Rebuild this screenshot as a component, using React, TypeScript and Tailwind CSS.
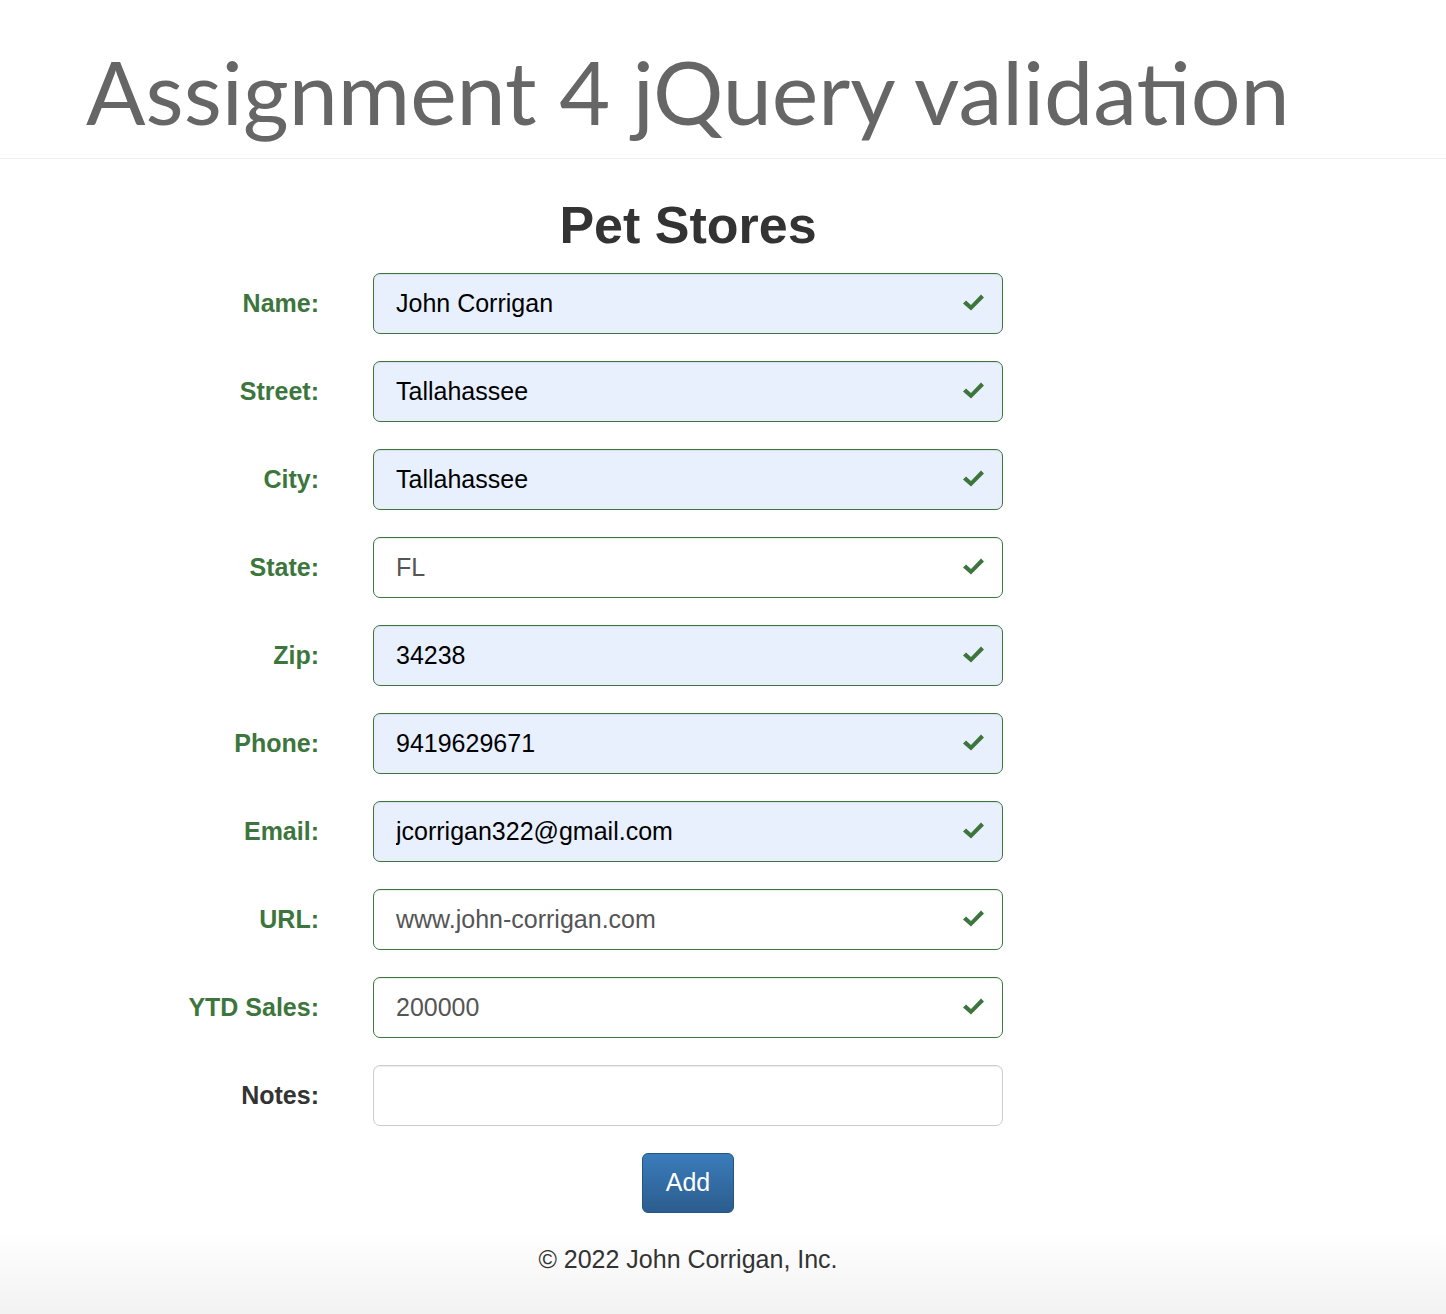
import React from "react";

type Field = {
  label: string;
  value: string;
  autofill: boolean;
  valid: boolean;
};

const fields: Field[] = [
  { label: "Name:", value: "John Corrigan", autofill: true, valid: true },
  { label: "Street:", value: "Tallahassee", autofill: true, valid: true },
  { label: "City:", value: "Tallahassee", autofill: true, valid: true },
  { label: "State:", value: "FL", autofill: false, valid: true },
  { label: "Zip:", value: "34238", autofill: true, valid: true },
  { label: "Phone:", value: "9419629671", autofill: true, valid: true },
  { label: "Email:", value: "jcorrigan322@gmail.com", autofill: true, valid: true },
  { label: "URL:", value: "www.john-corrigan.com", autofill: false, valid: true },
  { label: "YTD Sales:", value: "200000", autofill: false, valid: true },
  { label: "Notes:", value: "", autofill: false, valid: false },
];

const Check = () => (
  <svg width="21" height="17" viewBox="0 0 21 17" className="absolute right-[19px] top-[21px]">
    <polygon points="0,9.5 3,6.5 8,11 18,0.5 21,3.5 8,16.5" fill="#3c763d" />
  </svg>
);

const Row = ({ field }: { field: Field }) => {
  const input = field.valid
    ? "border-[#3c763d] shadow-[inset_0_1px_1px_rgba(0,0,0,0.075)]"
    : "border-[#ccc] shadow-[inset_0_1px_1px_rgba(0,0,0,0.075)]";
  const bg = field.autofill ? "bg-[#e8f0fe] text-black" : "bg-white text-[#555]";
  return (
    <div className="flex items-center mb-[27px]">
      <label
        className={`w-[319px] text-right font-bold text-[25px] ${
          field.valid ? "text-[#3c763d]" : "text-[#333]"
        }`}
      >
        {field.label}
      </label>
      <div className="relative ml-[54px] w-[630px]">
        <input
          readOnly
          value={field.value}
          className={`w-full h-[61px] rounded-[7px] border pl-[22px] pr-[60px] text-[25px] outline-none ${input} ${bg}`}
        />
        {field.valid && <Check />}
      </div>
    </div>
  );
};

export default function App() {
  return (
    <div className="min-h-[1314px] flex flex-col bg-white font-['Liberation_Sans',Arial,sans-serif]">
      <header className="h-[159px] border-b border-[#eee] pl-[86px] pt-[40px]">
        <h1 className="font-['Lato',sans-serif] text-[#666] text-[88px] leading-[103px]">
          Assignment 4 jQuery validation
        </h1>
      </header>

      <main className="pt-[36px]">
        <h2 className="ml-[373px] w-[630px] text-center text-[#333] font-bold text-[52px] leading-[60px] mb-[18px]">
          Pet Stores
        </h2>
        <form>
          {fields.map((f) => (
            <Row key={f.label} field={f} />
          ))}
          <div className="ml-[373px] w-[630px] flex justify-center">
            <button
              type="button"
              className="w-[92px] h-[60px] rounded-[6px] border border-[#245580] bg-gradient-to-b from-[#3b7cbb] to-[#2b5d8e] text-white text-[25px]"
            >
              Add
            </button>
          </div>
        </form>
      </main>

      <footer className="flex-1 bg-gradient-to-b from-white from-20% to-[#f2f2f2] pt-[28px]">
        <p className="ml-[373px] w-[630px] text-center text-[#333] text-[25px]">
          © 2022 John Corrigan, Inc.
        </p>
      </footer>
    </div>
  );
}
